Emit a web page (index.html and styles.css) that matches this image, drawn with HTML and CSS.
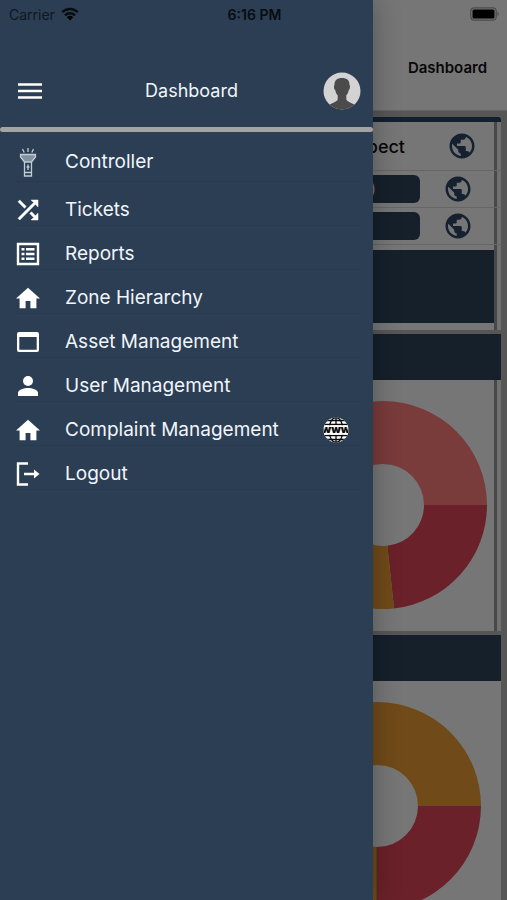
FILE: index.html
```html
<!DOCTYPE html>
<html lang="en">
<head>
<meta charset="utf-8">
<meta name="viewport" content="width=device-width, initial-scale=1">
<title>Dashboard</title>
<link rel="stylesheet" href="styles.css">
</head>
<body>
<svg class="defs" aria-hidden="true">
  <symbol id="globe" viewBox="0 0 24 24"><path d="M12 2C6.48 2 2 6.48 2 12s4.48 10 10 10 10-4.48 10-10S17.52 2 12 2zm-1 17.93c-3.95-.49-7-3.85-7-7.93 0-.62.08-1.21.21-1.79L9 15v1c0 1.100.9 2 2 2v1.930zm6.900-2.540c-.26-.81-1-1.390-1.900-1.390h-1v-3c0-.55-.45-1-1-1H8v-2h2c.55 0 1-.45 1-1V7h2c1.100 0 2-.9 2-2v-.41c2.930 1.190 5 4.060 5 7.410 0 2.080-.8 3.970-2.100 5.390z"/></symbol>
  <symbol id="home" viewBox="0 0 24 24"><path d="M10 20v-6h4v6h5v-8h3L12 3 2 12h3v8z"/></symbol>
</svg>
<main class="page">
  <header class="page-head"><h1>Dashboard</h1></header>
  <section class="summary">
    <div class="row row-title"><span>Prospect</span><svg class="globe"><use href="#globe"/></svg></div>
    <div class="row"><div class="pill">(0)</div><svg class="globe"><use href="#globe"/></svg></div>
    <div class="row"><div class="pill"></div><svg class="globe"><use href="#globe"/></svg></div>
    <div class="block"></div>
  </section>
  <section class="chart railed">
    <div class="band"></div>
    <svg class="donut" viewBox="0 0 208 208">
      <path class="pink" d="M0 104A104 104 0 0 1 208 104H145A41 41 0 0 0 63 104Z"/>
      <path class="red" d="M208 104A104 104 0 0 1 115 207.400L108.400 144.800A41 41 0 0 0 145 104Z"/>
      <path class="amber" d="M115 207.400A104 104 0 0 1 0 104H63A41 41 0 0 0 108.400 144.800Z"/>
    </svg>
  </section>
  <section class="chart second">
    <div class="band"></div>
    <svg class="donut" viewBox="0 0 208 208">
      <path class="amber" d="M0 104A104 104 0 0 1 208 104H145A41 41 0 0 0 63 104Z"/>
      <path class="red" d="M208 104A104 104 0 0 1 104 208V145A41 41 0 0 0 145 104Z"/>
      <path class="amber" d="M104 208A104 104 0 0 1 0 104H63A41 41 0 0 0 104 145Z"/>
      <path class="seam" d="M104 145V208"/>
    </svg>
  </section>
</main>

<aside class="drawer">
  <header class="drawer-head">
    <button class="icon-btn" aria-label="Menu"><svg class="burger" viewBox="0 0 24 16"><path d="M0 1.500H24M0 8H24M0 14.500H24"/></svg></button>
    <h2>Dashboard</h2>
    <svg class="avatar" viewBox="0 0 38 38"><defs><clipPath id="round"><circle cx="19" cy="19" r="18.500"/></clipPath></defs><circle class="face-bg" cx="19" cy="19" r="18.500"/><path clip-path="url(#round)" class="face" d="M19 6C14 6 11.300 8.500 11.500 13C10.600 13.500 11 17.500 12.300 18.200C12.800 20.700 13.600 22.200 14.700 23.300V27.500C13.500 30.500 8 31 4 34V38H34V34C30 31 24.500 30.500 23.300 27.500V23.300C24.400 22.200 25.200 20.700 25.700 18.200C27 17.500 27.400 13.500 26.500 13C26.700 8.500 24 6 19 6Z"/></svg>
  </header>
  <div class="divider"></div>
  <nav class="menu">
    <a class="tall" href="#"><svg viewBox="0 0 24 32"><g class="torch"><path d="M12 2V6M6.500 3L8.200 6.500M17.500 3L15.800 6.500"/><path class="torch-head" d="M4.500 8.500H19.500V11L15.500 16H8.500L4.500 11Z"/><path d="M8.500 16V30H15.500V16M8.500 26.500H15.500"/><path d="M12 18.500V24M10.500 21H13.500"/></g></svg><span>Controller</span></a>
    <a href="#"><svg viewBox="0 0 24 24"><path d="M10.590 9.170L5.410 4 4 5.410l5.170 5.170 1.420-1.410zM14.500 4l2.040 2.040L4 18.590 5.410 20 17.960 7.460 20 9.500V4h-5.500zm.33 9.410l-1.410 1.410 3.130 3.130L14.500 20H20v-5.500l-2.040 2.040-3.130-3.130z" transform="translate(-3 -3) scale(1.250)" stroke="#fff" stroke-width=".4"/></svg><span>Tickets</span></a>
    <a href="#"><svg viewBox="0 0 24 24"><path class="line" d="M2 2H22V22H2Z"/><path d="M5.500 6H8.500V8.500H5.500ZM10 6H18.500V8.500H10ZM5.500 10.800H8.500V13.300H5.500ZM10 10.800H18.500V13.300H10ZM5.500 15.500H8.500V18H5.500ZM10 15.500H18.500V18H10Z"/></svg><span>Reports</span></a>
    <a href="#"><svg viewBox="2 1.500 20 20"><use href="#home" width="24" height="24"/></svg><span>Zone Hierarchy</span></a>
    <a href="#"><svg viewBox="0 0 24 24"><path fill-rule="evenodd" d="M3 2H21Q23 2 23 4V20Q23 22 21 22H3Q1 22 1 20V4Q1 2 3 2ZM3.300 7V19.800H20.700V7Z"/></svg><span>Asset Management</span></a>
    <a href="#"><svg viewBox="0 0 24 24"><circle cx="12" cy="7" r="5"/><path d="M2 22V19C2 15.500 8 14 12 14S22 15.500 22 19V22Z"/></svg><span>User Management</span></a>
    <a href="#"><svg viewBox="2 1.500 20 20"><use href="#home" width="24" height="24"/></svg><span>Complaint Management</span>
      <svg class="www" viewBox="0 0 26 26"><defs><clipPath id="ball"><circle cx="13" cy="13" r="12.500"/></clipPath></defs><g clip-path="url(#ball)"><path d="M0 0H26V26H0Z"/><g class="grid"><path d="M0 3.500H26M0 7.500H26M0 18.500H26M0 22.500H26M13 0V8M13 18V26"/><ellipse cx="13" cy="13" rx="7" ry="12.500"/></g><path d="M0 8.300H26V17.700H0Z"/><text x="13" y="16" text-anchor="middle">www</text></g></svg></a>
    <a href="#"><svg viewBox="0 0 24 24"><path class="line" d="M12 1.500H2V22.500H12M8 12H20"/><path d="M18 7.500L23.500 12L18 16.500Z"/></svg><span>Logout</span></a>
  </nav>
</aside>

<div class="status">
  <div class="carrier">Carrier <svg viewBox="0 0 18 14"><path class="arc" d="M1.200 5.200A11.200 11.200 0 0 1 16.800 5.200M4 8.300A7.200 7.200 0 0 1 14 8.300"/><path d="M5.800 10.200A4.500 4.500 0 0 1 12.200 10.200L9 13.500Z"/></svg></div>
  <time>6:16 PM</time>
  <svg class="battery" viewBox="0 0 30 14"><rect class="case" x=".8" y=".8" width="25.400" height="12.400" rx="3.500"/><rect x="2.500" y="2.500" width="22" height="9" rx="1.500"/><path class="tip" d="M27.500 4.500Q30 7 27.500 9.500Z"/></svg>
</div>
</body>
</html>
```
FILE: styles.css
```css
:root {
  --navy: #2b3e53;
  --dark: #15202a;
  --paper: #767676;
  --gap: #565656;
}
* { box-sizing: border-box; }
body {
  margin: 0;
  min-height: 100vh;
  position: relative;
  overflow: hidden;
  background: var(--gap);
  font-family: Inter, "Liberation Sans", sans-serif;
}
h1, h2 { margin: 0; }
.defs { position: absolute; width: 0; height: 0; }

.page { height: 100vh; overflow: hidden; }
.page-head {
  height: 111px;
  padding: 58px 20px 0;
  background: var(--paper);
  border-bottom: 1px solid #666;
  text-align: right;
}
.page-head h1 { font-size: 15px; line-height: 20px; font-weight: 600; color: #080808; }

.summary, .chart { margin-right: 6px; background: var(--paper); }
.summary {
  margin-top: 6px;
  padding-bottom: 7px;
  border-top: 5px solid #141f2f;
  border-radius: 0 3px 0 0;
}
.summary, .railed {
  background: linear-gradient(to left, #707070 4px, #484848 4px, #484848 7px, var(--paper) 7px);
}
.row {
  height: 37px;
  display: flex;
  align-items: center;
  justify-content: flex-end;
  gap: 23px;
  padding-right: 28px;
  border-bottom: 1px solid #666;
}
.row-title {
  height: 49px;
  gap: 42px;
  padding-right: 24px;
  font-size: 18px;
  font-weight: 500;
  color: #080808;
}
.globe { width: 30px; height: 30px; fill: #162130; }
.pill {
  width: 160px;
  height: 28px;
  padding-right: 44px;
  border-radius: 6px;
  background: var(--dark);
  color: #777;
  font-size: 16px;
  line-height: 28px;
  text-align: right;
}
.block { height: 73px; margin: 5px 7px 0 0; background: var(--dark); }

.chart { margin-top: 4px; }
.band { height: 46px; background: var(--dark); }
.donut { display: block; width: 208px; height: 208px; margin: 21px 14px 0 auto; }
.railed { padding-bottom: 22px; }
.second .donut { margin-right: 20px; }
.second { padding-bottom: 22px; }
.pink { fill: #7a3b3b; }
.red { fill: #6a2129; }
.amber { fill: #704a18; }
.seam { stroke: #4f3317; stroke-width: 1; }

.drawer {
  position: absolute;
  inset: 0 134px 0 0;
  background: var(--navy);
  box-shadow: 2px 0 24px rgba(0, 0, 0, .25);
  color: #f1f5fb;
}
.drawer-head {
  height: 127px;
  display: flex;
  align-items: center;
  justify-content: space-between;
  padding: 55px 12px 0 14px;
}
.drawer-head h2 {
  flex: 1;
  padding-left: 14px;
  font-size: 18px;
  line-height: 24px;
  font-weight: 400;
  text-align: center;
}
.divider { height: 5px; border-radius: 3px; background: #a3a3a3; }
.icon-btn { width: 32px; height: 32px; padding: 4px; border: 0; background: none; }
.burger { display: block; width: 24px; height: 24px; stroke: #fff; stroke-width: 2.6; }
.avatar { width: 38px; height: 38px; }
.face-bg { fill: #d3d3d3; }
.face { fill: #4b4b4b; }

.menu a {
  height: 44px;
  margin: 0 13px 0 14px;
  padding: 16px 11px 3px 2px;
  display: flex;
  align-items: center;
  gap: 25px;
  border-bottom: 1px solid #273a4e;
  color: inherit;
  font-size: 19px;
  line-height: 24px;
  text-decoration: none;
}
.menu .tall { height: 50px; padding-top: 13px; }
.menu svg { width: 24px; height: 24px; flex: none; fill: #fff; }
.menu .tall svg { height: 32px; }
.menu .line { fill: none; stroke: #fff; stroke-width: 2.4; }
.menu .torch { fill: none; stroke: #c3ccd5; stroke-width: 1.3; }
.torch-head { fill: #8392a1; }
.menu .www { width: 26px; height: 26px; margin-left: auto; }
.www .grid { fill: none; stroke: #080808; stroke-width: 1.3; }
.www text { fill: #080808; font-size: 11px; font-weight: 900; }

.status {
  position: absolute;
  inset: 0 0 auto 0;
  height: 28px;
  padding: 0 7px 0 9px;
  display: grid;
  grid-template-columns: 1fr auto 1fr;
  align-items: center;
  font-size: 14px;
  color: #080c10;
}
.carrier { display: flex; align-items: center; gap: 6px; color: #101820; }
.carrier svg { width: 18px; height: 14px; }
.arc { fill: none; stroke: #080c10; stroke-width: 2.4; }
.status time { font-weight: 600; }
.battery { width: 30px; height: 14px; justify-self: end; }
.case { fill: none; stroke: #4c4c4c; stroke-width: 1.2; }
.tip { fill: #4c4c4c; }
```
